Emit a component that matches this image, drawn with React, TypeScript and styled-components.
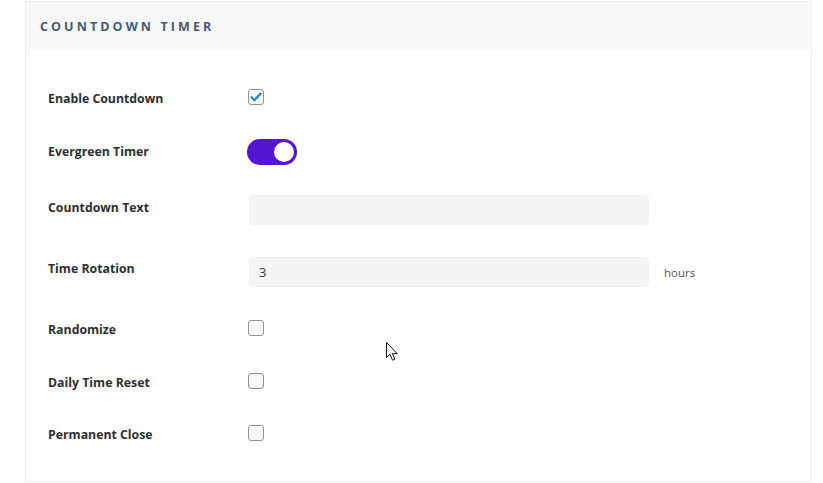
import React from "react";
import styled, { createGlobalStyle } from "styled-components";

const Global = createGlobalStyle`
  html, body { margin: 0; padding: 0; background: #fff; }
  body { font-family: "Open Sans", "Liberation Sans", sans-serif; }
  * { box-sizing: border-box; }
`;

const Page = styled.div`
  position: relative;
  width: 823px;
  height: 483px;
  padding: 1px 0 0 25px;
`;

const Panel = styled.section`
  width: 787px;
  height: 481px;
  border: 1px solid #eceef0;
  display: flex;
  flex-direction: column;
`;

const Header = styled.header`
  height: 48px;
  background: #f7f8fa;
  display: flex;
  align-items: center;
  padding-left: 14px;
  font-size: 12.5px;
  font-weight: 700;
  letter-spacing: 3.1px;
  color: #4a5a6e;
`;

const Body = styled.div`
  padding: 22px 22px 0 22px;
  display: flex;
  flex-direction: column;
`;

const Row = styled.div<{ $h: number }>`
  height: ${(p) => p.$h}px;
  display: flex;
  align-items: center;
`;

const Label = styled.div<{ $up?: number }>`
  width: 200px;
  flex: none;
  font-size: 12.3px;
  font-weight: 700;
  color: #2c3035;
  margin-bottom: ${(p) => (p.$up ? p.$up * 2 : 0)}px;
`;

const Check = styled.span`
  width: 16px;
  height: 16px;
  border: 1px solid #8c949c;
  border-radius: 3px;
  background: #f8f8f8;
  display: inline-flex;
  align-items: center;
  justify-content: center;
  margin-bottom: 2px;
`;

const Toggle = styled.span`
  width: 50px;
  height: 26px;
  border-radius: 13px;
  background: #5614d5;
  display: inline-flex;
  align-items: center;
  justify-content: flex-end;
  padding-right: 3px;
  margin-left: -1px;
  margin-top: 2px;
`;

const Knob = styled.span`
  width: 20px;
  height: 20px;
  border-radius: 50%;
  background: #fffff6;
`;

const Field = styled.div`
  width: 400px;
  height: 30px;
  margin-left: 1px;
  background: #f5f5f5;
  border: 1px solid #f0f0f0;
  border-radius: 4px;
  display: flex;
  align-items: center;
  padding-left: 9px;
  font-size: 13px;
  color: #3a3a3a;
`;

const Unit = styled.span`
  margin-left: 15px;
  font-size: 11.5px;
  color: #555;
`;

const Cursor = styled.svg`
  position: absolute;
  left: 386px;
  top: 342px;
`;

const CheckBox = ({ on }: { on?: boolean }) => (
  <Check>
    {on && (
      <svg width="12" height="10" viewBox="0 0 12 10">
        <path d="M1.5 5.2 L4.5 8.2 L10.6 1.6" fill="none" stroke="#1f8ac8" strokeWidth="2.2" strokeLinecap="round" strokeLinejoin="round" />
      </svg>
    )}
  </Check>
);

export default function App() {
  return (
    <>
      <Global />
      <Page>
        <Panel>
          <Header>COUNTDOWN TIMER</Header>
          <Body>
            <Row $h={52}>
              <Label>Enable Countdown</Label>
              <CheckBox on />
            </Row>
            <Row $h={54}>
              <Label>Evergreen Timer</Label>
              <Toggle>
                <Knob />
              </Toggle>
            </Row>
            <Row $h={64}>
              <Label $up={3}>Countdown Text</Label>
              <Field />
            </Row>
            <Row $h={60}>
              <Label $up={4}>Time Rotation</Label>
              <Field>3</Field>
              <Unit>hours</Unit>
            </Row>
            <Row $h={54}>
              <Label>Randomize</Label>
              <CheckBox />
            </Row>
            <Row $h={52}>
              <Label>Daily Time Reset</Label>
              <CheckBox />
            </Row>
            <Row $h={52}>
              <Label>Permanent Close</Label>
              <CheckBox />
            </Row>
          </Body>
        </Panel>
        <Cursor width="13" height="20" viewBox="0 0 13 20">
          <path d="M0.5 0.5 L0.5 15.5 L4 12.3 L6.5 18.2 L8.8 17.2 L6.4 11.6 L11.2 11.6 Z" fill="#fff" stroke="#111" strokeWidth="1" strokeLinejoin="round" />
        </Cursor>
      </Page>
    </>
  );
}
